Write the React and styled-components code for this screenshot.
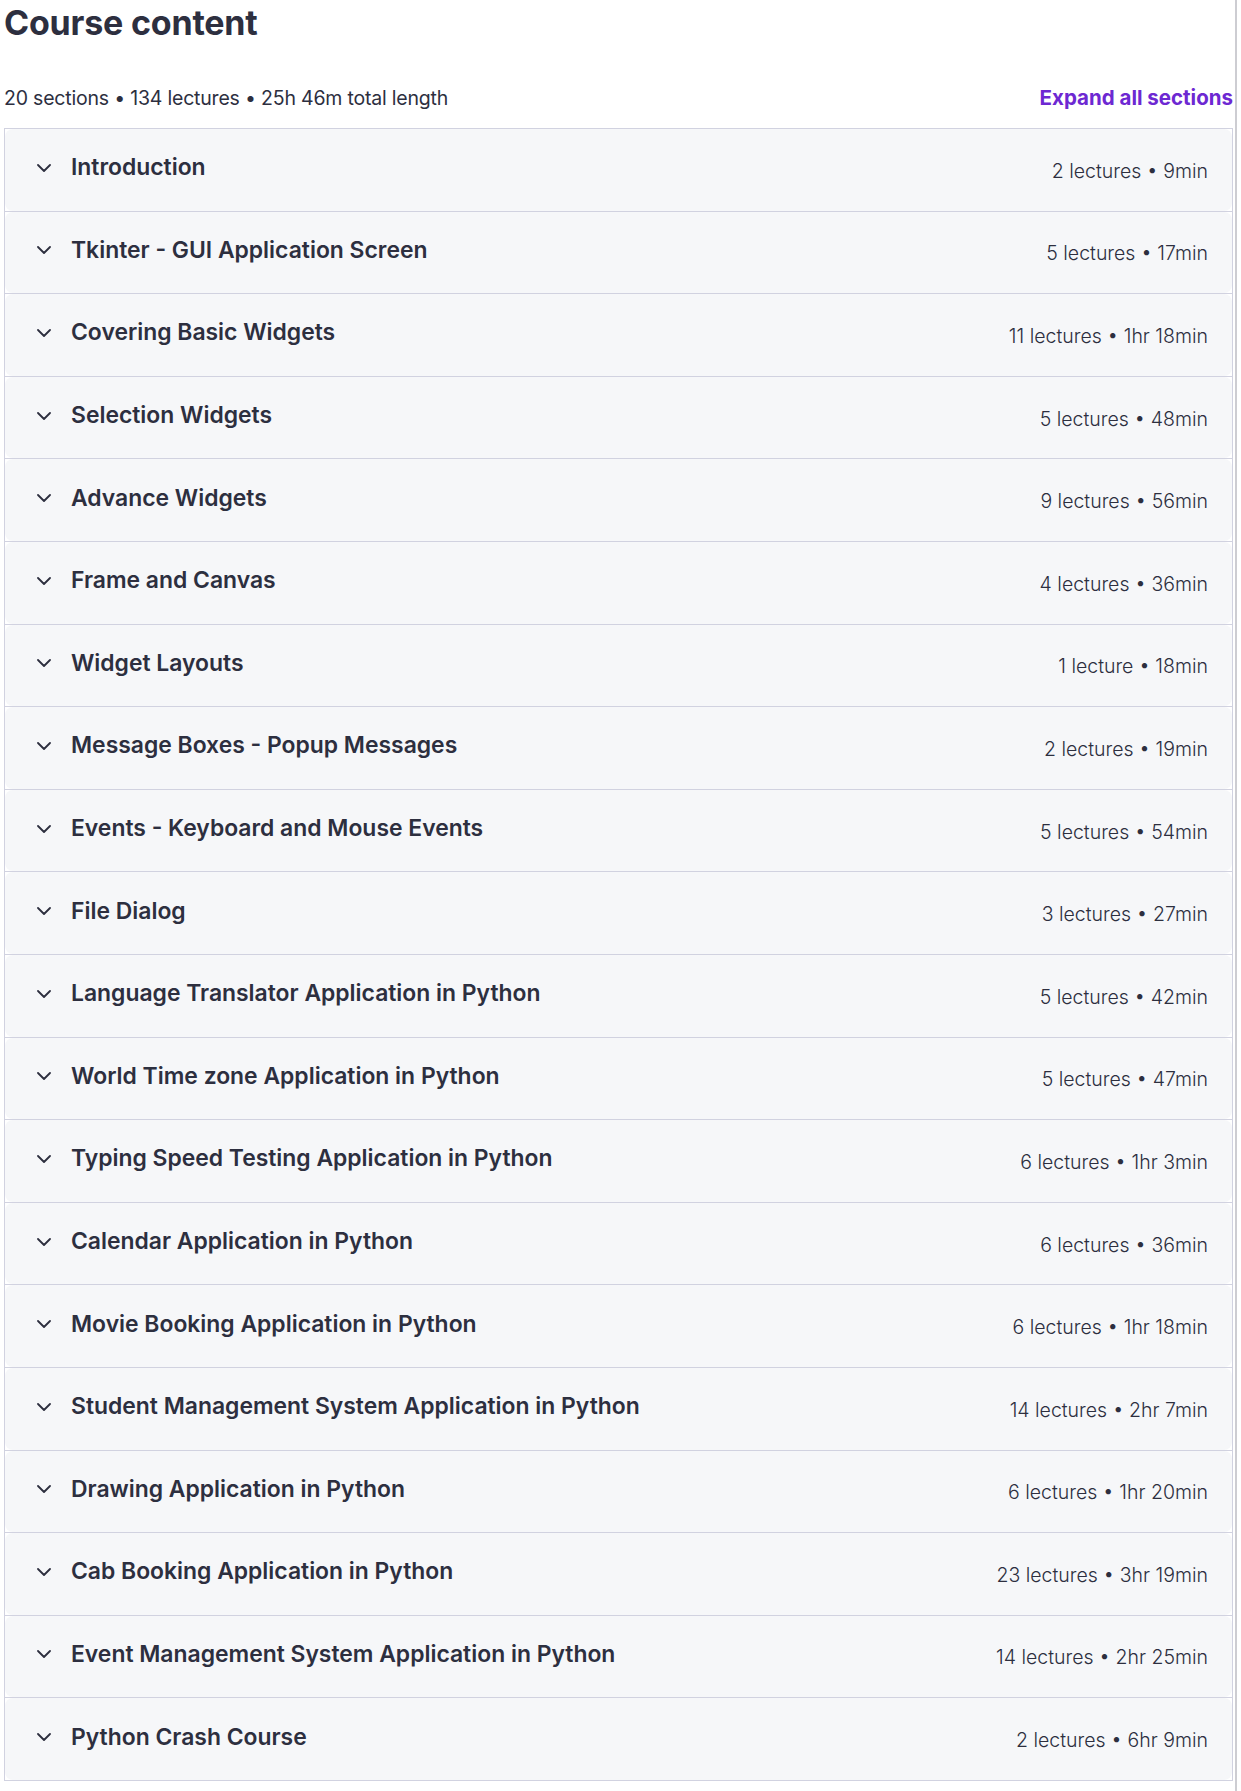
import React from 'react';
import styled, { createGlobalStyle } from 'styled-components';

const GlobalStyle = createGlobalStyle`
  body {
    margin: 0;
    background: #ffffff;
    font-family: Inter, "Noto Sans", sans-serif;
    color: #2d2f3f;
  }
`;

const Page = styled.div`
  width: 1237px;
  min-height: 1791px;
  box-sizing: border-box;
  border-right: 2px solid #cdcdd2;
  padding-left: 4px;
`;

const Content = styled.div`
  width: 1229px;
`;

const Title = styled.h2`
  margin: 0;
  padding-top: 3px;
  font-size: 34px;
  line-height: 40px;
  font-weight: 700;
  letter-spacing: -0.2px;
`;

const Summary = styled.div`
  display: flex;
  justify-content: space-between;
  align-items: baseline;
  margin-top: 43px;
  height: 42px;
`;

const Stats = styled.span`
  font-size: 19.5px;
  font-weight: 400;
  line-height: 24px;
  letter-spacing: -0.2px;
`;

const ExpandAll = styled.button`
  border: none;
  background: none;
  padding: 0;
  font-family: inherit;
  font-size: 20.5px;
  font-weight: 700;
  line-height: 24px;
  color: #6d28d2;
  cursor: pointer;
`;

const SectionList = styled.div`
  border: 1px solid #d1d2e0;
`;

const Section = styled.div`
  & + & {
    border-top: 1px solid #d1d2e0;
  }
`;

const SectionHeader = styled.div`
  display: flex;
  align-items: center;
  height: 81.6px;
  padding: 0 24px 0 32px;
  background: #f6f7f9;
  border-radius: 8px;
  box-sizing: border-box;
`;

const Chevron = styled.svg`
  flex: none;
  width: 14px;
  height: 8px;
  margin-right: 20px;
  margin-top: -4px;
`;

const SectionTitle = styled.span`
  flex: 1;
  font-size: 22.9px;
  font-weight: 600;
  line-height: 28px;
  margin-top: -5px;
`;

const SectionMeta = styled.span`
  font-size: 19.5px;
  font-weight: 300;
  line-height: 24px;
  margin-top: 2px;
`;

const sections = [
  ['Introduction', '2 lectures • 9min'],
  ['Tkinter - GUI Application Screen', '5 lectures • 17min'],
  ['Covering Basic Widgets', '11 lectures • 1hr 18min'],
  ['Selection Widgets', '5 lectures • 48min'],
  ['Advance Widgets', '9 lectures • 56min'],
  ['Frame and Canvas', '4 lectures • 36min'],
  ['Widget Layouts', '1 lecture • 18min'],
  ['Message Boxes - Popup Messages', '2 lectures • 19min'],
  ['Events - Keyboard and Mouse Events', '5 lectures • 54min'],
  ['File Dialog', '3 lectures • 27min'],
  ['Language Translator Application in Python', '5 lectures • 42min'],
  ['World Time zone Application in Python', '5 lectures • 47min'],
  ['Typing Speed Testing Application in Python', '6 lectures • 1hr 3min'],
  ['Calendar Application in Python', '6 lectures • 36min'],
  ['Movie Booking Application in Python', '6 lectures • 1hr 18min'],
  ['Student Management System Application in Python', '14 lectures • 2hr 7min'],
  ['Drawing Application in Python', '6 lectures • 1hr 20min'],
  ['Cab Booking Application in Python', '23 lectures • 3hr 19min'],
  ['Event Management System Application in Python', '14 lectures • 2hr 25min'],
  ['Python Crash Course', '2 lectures • 6hr 9min'],
];

const App = () => {
  return (
    <Page>
      <GlobalStyle />
      <Content>
        <Title>Course content</Title>
        <Summary>
          <Stats>20 sections • 134 lectures • 25h 46m total length</Stats>
          <ExpandAll>Expand all sections</ExpandAll>
        </Summary>
        <SectionList>
          {sections.map(([name, meta]) => (
            <Section key={name}>
              <SectionHeader>
                <Chevron viewBox="0 0 14 8" fill="none">
                  <path
                    d="M1 1l6 6 6-6"
                    stroke="#2d2f3f"
                    strokeWidth="1.8"
                    strokeLinecap="round"
                    strokeLinejoin="round"
                  />
                </Chevron>
                <SectionTitle>{name}</SectionTitle>
                <SectionMeta>{meta}</SectionMeta>
              </SectionHeader>
            </Section>
          ))}
        </SectionList>
      </Content>
    </Page>
  );
};

export default App;
